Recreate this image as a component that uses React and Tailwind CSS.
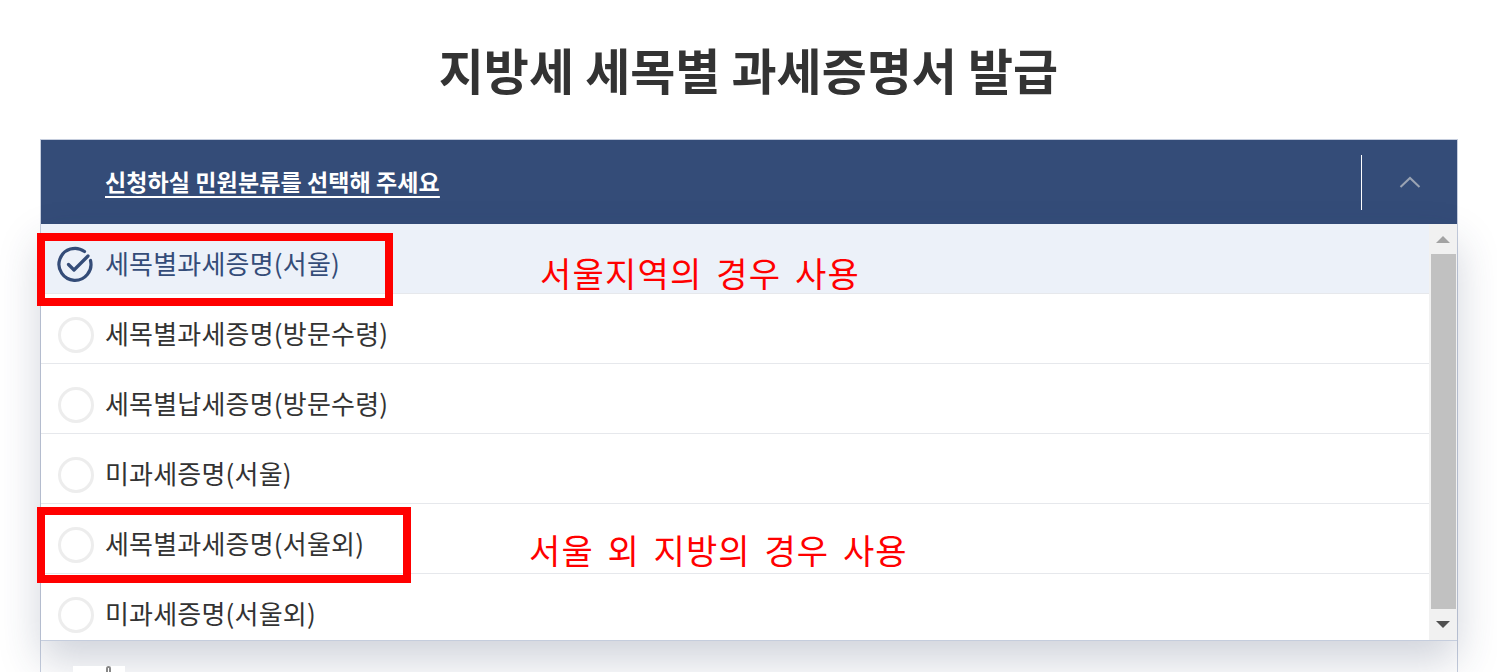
import React from "react";

const rows = [
  { label: "세목별과세증명(서울)", checked: true },
  { label: "세목별과세증명(방문수령)" },
  { label: "세목별납세증명(방문수령)" },
  { label: "미과세증명(서울)" },
  { label: "세목별과세증명(서울외)" },
  { label: "미과세증명(서울외)" },
];

function CheckIcon() {
  return (
    <svg width="38" height="38" viewBox="0 0 38 38" fill="none">
      <path
        d="M33.5 14.5 A16 16 0 1 1 27.5 5.5"
        stroke="#344c78"
        strokeWidth="3.2"
        strokeLinecap="round"
        fill="none"
      />
      <path
        d="M11.5 18.5 L17 24 L31 10"
        stroke="#344c78"
        strokeWidth="3.2"
        strokeLinecap="round"
        strokeLinejoin="round"
        fill="none"
      />
    </svg>
  );
}

export default function App() {
  return (
    <div
      className="relative w-[1497px] h-[672px] overflow-hidden bg-white"
      style={{ fontFamily: '"Noto Sans CJK KR", "Noto Sans", sans-serif' }}
    >
      <div className="h-[139px] pb-[2px] flex items-center justify-center text-[49px] font-bold text-[#333333]">
        지방세 세목별 과세증명서 발급
      </div>

      <div className="ml-[40px] w-[1418px] border-x border-t border-[#c5cddd]">
        <div className="h-[84px] bg-[#344c78] flex items-center">
          <div className="flex-1 pl-[64px] pb-[2px] text-[23px] font-bold text-white underline underline-offset-[5px] decoration-[2px] tracking-[0.1px]">
            신청하실 민원분류를 선택해 주세요
          </div>
          <div className="w-px h-[55px] bg-white" />
          <div className="w-[95px] flex items-center justify-center">
            <svg width="22" height="14" viewBox="0 0 22 14" fill="none">
              <path d="M1.5 12 L11 3 L20.5 12" stroke="#9aa3b3" strokeWidth="2" fill="none" />
            </svg>
          </div>
        </div>

        <div className="relative z-10 h-[417px] flex bg-white border-b border-[#c5cddd] shadow-[0_20px_40px_rgba(40,55,90,0.22)]">
          <div className="flex-1 overflow-hidden">
            {rows.map((r, i) => (
              <div
                key={i}
                className={
                  "h-[70px] flex items-center pl-[16px] pt-[12px] border-b border-[#e6e8ec] " +
                  (r.checked ? "bg-[#ecf1f9]" : "bg-white")
                }
              >
                <div className="w-[38px] h-[38px] flex items-center justify-center">
                  {r.checked ? (
                    <CheckIcon />
                  ) : (
                    <div className="w-[36px] h-[36px] rounded-full border-[3px] border-[#ededed]" />
                  )}
                </div>
                <div
                  className={
                    "ml-[10px] text-[26px] tracking-[0.2px] leading-[38px] pb-[4px] " +
                    (r.checked ? "text-[#344c78]" : "text-[#333333]")
                  }
                >
                  {r.label}
                </div>
              </div>
            ))}
          </div>
          <div className="w-[28px] bg-[#f1f1f1] flex flex-col">
            <div className="h-[30px] flex items-center justify-center">
              <div className="w-0 h-0 border-l-[7px] border-r-[7px] border-b-[7px] border-l-transparent border-r-transparent border-b-[#a3a3a3]" />
            </div>
            <div className="ml-[2px] mr-[1px] h-[355px] bg-[#c1c1c1]" />
            <div className="flex-1 flex items-center justify-center">
              <div className="w-0 h-0 border-l-[7px] border-r-[7px] border-t-[7px] border-l-transparent border-r-transparent border-t-[#505050]" />
            </div>
          </div>
        </div>

        <div className="h-[60px] bg-white relative">
          <div className="absolute z-20 left-[32px] top-[25px] w-[52px] h-[30px] bg-white">
            <div className="absolute left-[33px] top-[0px] w-[5px] h-[6px] rounded-t-full border-2 border-b-0 border-[#888888]" />
          </div>
        </div>
      </div>

      {/* annotations */}
      <div className="absolute z-20 left-[37px] top-[233px] w-[356px] h-[73px] border-[8px] border-[#ff0000]" />
      <div className="absolute z-20 left-[37px] top-[507px] w-[374px] h-[76px] border-[8px] border-[#ff0000]" />
      <div className="absolute z-20 left-[540px] top-[253px] text-[34px] leading-[40px] tracking-[1.2px] text-[#ff0000] [word-spacing:5px]">
        서울지역의 경우 사용
      </div>
      <div className="absolute z-20 left-[529px] top-[530px] text-[34px] leading-[40px] tracking-[1.1px] text-[#ff0000] [word-spacing:5px]">
        서울 외 지방의 경우 사용
      </div>
    </div>
  );
}
